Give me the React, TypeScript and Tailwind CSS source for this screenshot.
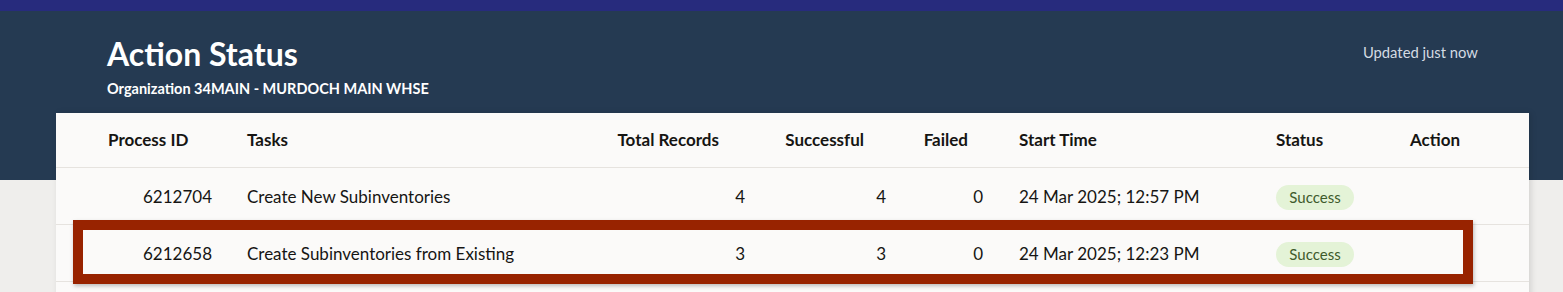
import React from "react";

const cols = "grid grid-cols-[175px_369px_161px_141px_97px_261px_134px_135px]";

type Row = { id: string; task: string; total: string; ok: string; fail: string; time: string };
const rows: Row[] = [
  { id: "6212704", task: "Create New Subinventories", total: "4", ok: "4", fail: "0", time: "24 Mar 2025; 12:57 PM" },
  { id: "6212658", task: "Create Subinventories from Existing", total: "3", ok: "3", fail: "0", time: "24 Mar 2025; 12:23 PM" },
];

export default function App() {
  return (
    <div className="relative w-[1563px] h-[292px] overflow-hidden bg-[#efeeec] font-['Lato','Noto_Sans',sans-serif] text-[#161513]">
      <div className="h-[11px] bg-[#272b7d]" />
      <div className="h-[169px] bg-[#253a52] flex justify-between pl-[107px] pr-[85px] pt-[26px]">
        <div className="flex flex-col">
          <h1 className="text-[32px] leading-[34px] font-bold text-white">Action Status</h1>
          <div className="mt-[9px] text-[14.5px] leading-[18px] font-bold text-white">Organization 34MAIN - MURDOCH MAIN WHSE</div>
        </div>
        <div className="pt-[6px] text-[14.8px] leading-[18px] text-[#d4dbe3]">Updated just now</div>
      </div>
      <div className="ml-[56px] w-[1473px] -mt-[67px] bg-[#fbfaf9] shadow-[2px_0_6px_rgba(0,0,0,0.12)] h-[200px] text-[17px]">
        <div className={`${cols} h-[55px] items-center font-bold border-b border-[#e6e3df]`}>
          <div className="pl-[52px]">Process ID</div>
          <div className="pl-[16px]">Tasks</div>
          <div className="text-right pr-[42px]">Total Records</div>
          <div className="text-right pr-[38px]">Successful</div>
          <div className="text-right pr-[31px]">Failed</div>
          <div className="pl-[20px]">Start Time</div>
          <div className="pl-[16px]">Status</div>
          <div className="pl-[16px]">Action</div>
        </div>
        {rows.map((r) => (
          <div key={r.id} className={`${cols} h-[57px] items-center pt-[2px] border-b border-[#e6e3df]`}>
            <div className="text-right pr-[19px]">{r.id}</div>
            <div className="pl-[16px]">{r.task}</div>
            <div className="text-right pr-[16px]">{r.total}</div>
            <div className="text-right pr-[16px]">{r.ok}</div>
            <div className="text-right pr-[16px]">{r.fail}</div>
            <div className="pl-[20px]">{r.time}</div>
            <div className="pl-[16px]">
              <span className="inline-flex items-center justify-center w-[78px] h-[25px] rounded-full bg-[#e4f3d7] text-[#3f5b2c] text-[15px]">Success</span>
            </div>
            <div />
          </div>
        ))}
      </div>
      <div className="absolute left-[73px] top-[220px] w-[1400px] h-[64px] border-[10px] border-[#982300] shadow-[1px_2px_4px_rgba(0,0,0,0.25)]" />
    </div>
  );
}
